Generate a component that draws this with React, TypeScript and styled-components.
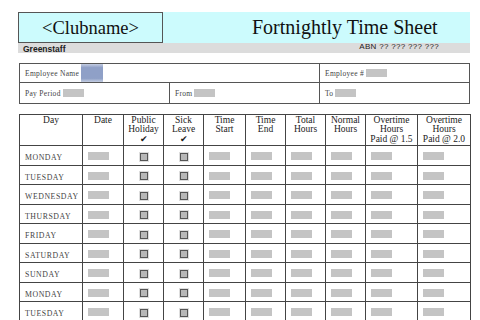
import styled, { createGlobalStyle } from "styled-components";

const GlobalStyle = createGlobalStyle`
  html, body { margin: 0; padding: 0; background: #fff; }
  body { font-family: "Liberation Serif", serif; color: #222; }
`;

const Page = styled.div`
  width: 452px;
  margin: 12px 0 0 18px;
  display: flex;
  flex-direction: column;
`;

const Banner = styled.div`
  display: flex;
  height: 31px;
  background: #ccfbfd;
`;

const ClubBox = styled.div`
  width: 143px;
  border: 1px solid #555;
  display: flex;
  align-items: center;
  justify-content: center;
  font-size: 18.5px;
  color: #111;
  padding-top: 1px;
`;

const Title = styled.div`
  flex: 1;
  display: flex;
  align-items: flex-end;
  padding-left: 89px;
  padding-bottom: 4px;
  font-size: 20px;
  color: #111;
`;

const SubBand = styled.div`
  height: 10px;
  background: #dcdcdc;
  display: flex;
  justify-content: space-between;
  font-family: "Liberation Sans", Arial, sans-serif;
  font-size: 8px;
  color: #222;
`;

const Staff = styled.span`
  padding: 1px 0 0 5px;
  line-height: 10px;
  font-weight: bold;
  font-size: 8.5px;
`;

const Abn = styled.span`
  padding-right: 31px;
  line-height: 7px;
  font-size: 8px;
  letter-spacing: 0.3px;
`;

const InfoBox = styled.div`
  margin: 10px 0 0 1px;
  width: 449px;
  border: 1px solid #555;
  display: grid;
  grid-template-columns: 150px 150px 1fr;
  grid-template-rows: 19px 20px;
`;

const InfoCell = styled.div<{ $span?: number; $right?: boolean; $top?: boolean }>`
  grid-column: span ${(p) => p.$span ?? 1};
  display: flex;
  align-items: center;
  gap: 2px;
  padding-left: 5px;
  font-size: 7.5px;
  color: #444;
  letter-spacing: 0.3px;
  border-right: ${(p) => (p.$right ? "1px solid #555" : "none")};
  border-bottom: ${(p) => (p.$top ? "1px solid #555" : "none")};
`;

const Field = styled.span<{ $w?: number }>`
  display: inline-block;
  width: ${(p) => p.$w ?? 21}px;
  height: 8px;
  background: #c4c4c4;
`;

const Selected = styled.span`
  align-self: stretch;
  width: 22px;
  background: linear-gradient(#c4cde2, #8fa0c7 20%, #8fa0c7 80%, #c4cde2);
`;

const Sheet = styled.table`
  margin: 10px 0 0 1px;
  width: 451px;
  border-collapse: collapse;
  table-layout: fixed;
`;

const Th = styled.th`
  border: 1px solid #444;
  height: 29px;
  padding: 1px 0 0;
  vertical-align: top;
  font-weight: normal;
  font-size: 9.5px;
  line-height: 9.3px;
  color: #222;
`;

const Td = styled.td<{ $center?: boolean }>`
  border: 1px solid #444;
  height: 18.5px;
  padding: 0 0 0 ${(p) => (p.$center ? 0 : 5)}px;
  text-align: ${(p) => (p.$center ? "center" : "left")};
  vertical-align: middle;
`;

const DayName = styled.span`
  font-size: 7.8px;
  letter-spacing: 0.55px;
  color: #444;
`;

const Box = styled.span`
  display: inline-block;
  width: 6px;
  height: 6px;
  border: 1px solid #555;
  background: #b8b8b8;
  box-shadow: 0 0 0 1px #ddd;
  vertical-align: middle;
`;

const Tick = styled.div`
  font-size: 9px;
  line-height: 8px;
`;

const columns = [63, 41, 40, 40, 42, 40, 40, 40, 52, 53];
const days = [
  "MONDAY",
  "TUESDAY",
  "WEDNESDAY",
  "THURSDAY",
  "FRIDAY",
  "SATURDAY",
  "SUNDAY",
  "MONDAY",
  "TUESDAY",
];

export default function App() {
  return (
    <>
      <GlobalStyle />
      <Page>
        <Banner>
          <ClubBox>&lt;Clubname&gt;</ClubBox>
          <Title>Fortnightly Time Sheet</Title>
        </Banner>
        <SubBand>
          <Staff>Greenstaff</Staff>
          <Abn>ABN ?? ??? ??? ???</Abn>
        </SubBand>

        <InfoBox>
          <InfoCell $span={2} $right $top>
            Employee Name <Selected />
          </InfoCell>
          <InfoCell $top>
            Employee # <Field />
          </InfoCell>
          <InfoCell $right>
            Pay Period <Field />
          </InfoCell>
          <InfoCell $right>
            From <Field />
          </InfoCell>
          <InfoCell>
            To <Field />
          </InfoCell>
        </InfoBox>

        <Sheet>
          <colgroup>
            {columns.map((w, i) => (
              <col key={i} style={{ width: w }} />
            ))}
          </colgroup>
          <thead>
            <tr>
              <Th>Day</Th>
              <Th>Date</Th>
              <Th>
                Public
                <br />
                Holiday
                <Tick>✔</Tick>
              </Th>
              <Th>
                Sick
                <br />
                Leave
                <Tick>✔</Tick>
              </Th>
              <Th>
                Time
                <br />
                Start
              </Th>
              <Th>
                Time
                <br />
                End
              </Th>
              <Th>
                Total
                <br />
                Hours
              </Th>
              <Th>
                Normal
                <br />
                Hours
              </Th>
              <Th>
                Overtime
                <br />
                Hours
                <br />
                Paid @ 1.5
              </Th>
              <Th>
                Overtime
                <br />
                Hours
                <br />
                Paid @ 2.0
              </Th>
            </tr>
          </thead>
          <tbody>
            {days.map((d, i) => (
              <tr key={i}>
                <Td>
                  <DayName>{d}</DayName>
                </Td>
                <Td>
                  <Field />
                </Td>
                <Td $center>
                  <Box />
                </Td>
                <Td $center>
                  <Box />
                </Td>
                <Td>
                  <Field />
                </Td>
                <Td>
                  <Field />
                </Td>
                <Td>
                  <Field />
                </Td>
                <Td>
                  <Field />
                </Td>
                <Td>
                  <Field />
                </Td>
                <Td>
                  <Field />
                </Td>
              </tr>
            ))}
          </tbody>
        </Sheet>
      </Page>
    </>
  );
}
